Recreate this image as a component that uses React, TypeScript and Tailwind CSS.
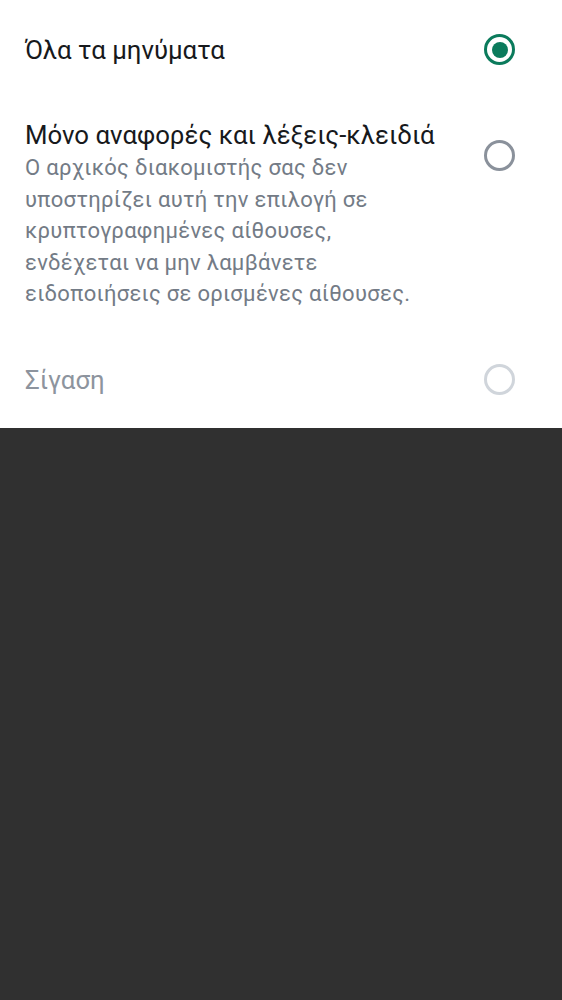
import React from "react"

type Option = {
  label: string
  description?: string
  checked?: boolean
  disabled?: boolean
}

function Radio({ checked, disabled }: { checked?: boolean; disabled?: boolean }) {
  const ring = checked
    ? "border-[#0b7b5c]"
    : disabled
      ? "border-[#d0d5db]"
      : "border-[#8a919b]"
  return (
    <div className={`flex h-[31px] w-[31px] items-center justify-center rounded-full border-[3px] ${ring}`}>
      {checked && <div className="h-[16px] w-[16px] rounded-full bg-[#0b7b5c]" />}
    </div>
  )
}

// Notification level picker for a room
export default function App() {
  const options: Option[] = [
    { label: "Όλα τα μηνύματα", checked: true },
    {
      label: "Μόνο αναφορές και λέξεις-κλειδιά",
      description:
        "Ο αρχικός διακομιστής σας δεν υποστηρίζει αυτή την επιλογή σε κρυπτογραφημένες αίθουσες, ενδέχεται να μην λαμβάνετε ειδοποιήσεις σε ορισμένες αίθουσες.",
    },
    { label: "Σίγαση", disabled: true },
  ]

  return (
    <div className="min-h-screen bg-[#303030] font-['Roboto',sans-serif]">
      <div className="flex flex-col gap-[55px] bg-white pb-[33px] pl-[25px] pr-[47px] pt-[35px]">
        {options.map((o, i) => (
          <div key={i} className="flex items-start justify-between">
            <div className="w-[413px]">
              <div
                className={`whitespace-nowrap text-[25.8px] leading-[30px] ${o.disabled ? "text-[#8d949e]" : "text-[#17191c]"}`}
              >
                {o.label}
              </div>
              {o.description && (
                <p className="mt-[2px] text-[22px] leading-[31.5px] tracking-[0.3px] text-[#737b86]">
                  {o.description}
                </p>
              )}
            </div>
            <div className={o.description ? "mt-[20px]" : "-mt-px"}>
              <Radio checked={o.checked} disabled={o.disabled} />
            </div>
          </div>
        ))}
      </div>
    </div>
  )
}
